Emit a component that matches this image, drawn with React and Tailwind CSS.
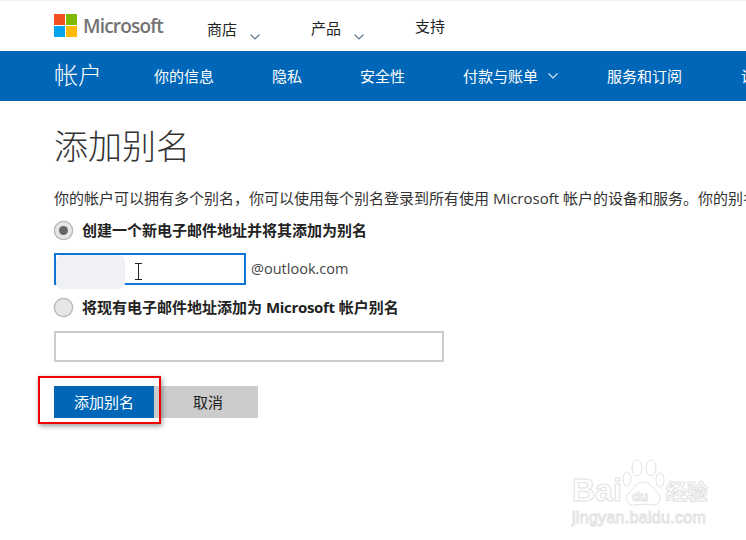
import React from 'react';

const FONT = "font-['Open_Sans','Noto_Sans_CJK_SC',sans-serif]";

function Chevron({ className }) {
    return (
        <svg className={className} width="10" height="6" viewBox="0 0 10 6" fill="none" stroke="currentColor" strokeWidth="1.2">
            <path d="M0.5 0.5 L5 5 L9.5 0.5" />
        </svg>
    );
}

function Radio({ checked }) {
    return (
        <span className="flex h-[19px] w-[19px] shrink-0 items-center justify-center rounded-full border border-[#b5b5b5] bg-[#e6e6e6] shadow-[0_0_1px_#999]">
            {checked && <span className="h-[9px] w-[9px] rounded-full bg-[#666666]" />}
        </span>
    );
}

function Watermark() {
    const outline = "text-white [-webkit-text-stroke:1px_#e2e2e2]";
    return (
        <div className="absolute left-[572px] top-[459px] w-[150px]">
            <div className="flex items-end">
                <span className={`font-['Liberation_Sans',sans-serif] text-[32px] leading-[32px] font-bold ${outline}`}>Bai</span>
                <svg className="ml-[-1px] mb-[-1px]" width="44" height="48" viewBox="0 0 44 48" fill="white" stroke="#e2e2e2" strokeWidth="1">
                    <ellipse cx="6" cy="20" rx="4" ry="7" />
                    <ellipse cx="16" cy="9" rx="5" ry="8" />
                    <ellipse cx="30" cy="9" rx="5" ry="8" />
                    <ellipse cx="39" cy="21" rx="4" ry="7" />
                    <path d="M22 23 C14 23 13 30 8 34 C2 40 7 47 14 46 C19 45 26 45 31 46 C38 47 42 40 37 34 C32 30 30 23 22 23 Z" />
                    <text x="11" y="42" fontSize="13" fontFamily="Liberation Sans" fontWeight="700" fill="white">du</text>
                </svg>
                <span className={`ml-[1px] text-[21px] leading-[30px] font-bold ${outline}`}>经验</span>
            </div>
            <div className={`mt-[2px] font-['Liberation_Sans',sans-serif] text-[16px] leading-[20px] tracking-[0.3px] ${outline} [-webkit-text-stroke-width:0.6px]`}>jingyan.baidu.com</div>
        </div>
    );
}

export default function App() {
    return (
        <div className={`relative h-[540px] w-[746px] overflow-hidden bg-white ${FONT}`}>
            <div className="h-[1px] bg-[#f0f0f0]" />

            {/* top header */}
            <div className="flex h-[50px] items-start pl-[54px]">
                <div className="mt-[13px] grid h-[23px] w-[23px] grid-cols-2 gap-[1px]">
                    <span className="bg-[#f25022]" />
                    <span className="bg-[#7fba00]" />
                    <span className="bg-[#00a4ef]" />
                    <span className="bg-[#ffb900]" />
                </div>
                <span className="ml-[6px] mt-[10px] w-[79px] text-[19px] leading-[30px] font-semibold tracking-[-0.8px] text-[#737373]">Microsoft</span>
                <span className="ml-[45px] mt-[17px] text-[15px] leading-[22px] text-[#222]">商店</span>
                <Chevron className="ml-[13px] mt-[33px] text-[#60788f]" />
                <span className="ml-[51px] mt-[16px] text-[15px] leading-[22px] text-[#222]">产品</span>
                <Chevron className="ml-[13px] mt-[33px] text-[#60788f]" />
                <span className="ml-[51px] mt-[14px] text-[15px] leading-[22px] text-[#222]">支持</span>
            </div>

            {/* blue nav */}
            <div className="flex h-[50px] items-center whitespace-nowrap bg-[#0067b8] pl-[54px] text-[15px] text-white">
                <span className="mb-[2px] w-[100px] shrink-0 text-[24px] leading-[32px] font-light">帐户</span>
                <span className="w-[118px] shrink-0">你的信息</span>
                <span className="w-[88px] shrink-0">隐私</span>
                <span className="w-[103px] shrink-0">安全性</span>
                <span className="shrink-0">付款与账单</span>
                <Chevron className="ml-[10px] mr-[49px] shrink-0 text-[#d5e6f5]" />
                <span className="w-[134px] shrink-0">服务和订阅</span>
                <span className="shrink-0">设置</span>
            </div>

            {/* form */}
            <div className="pl-[54px]">
                <h1 className="mt-[23px] text-[34px] leading-[44px] font-light text-[#333]">添加别名</h1>
                <p className="mt-[19px] whitespace-nowrap text-[15px] leading-[22px] text-[#333]">
                    你的帐户可以拥有多个别名，你可以使用每个别名登录到所有使用 Microsoft 帐户的设备和服务。你的别名都使用相同的密码。
                </p>
                <label className="mt-[10px] flex h-[22px] items-center gap-[9px] text-[15px] font-bold text-[#222]">
                    <Radio checked />
                    创建一个新电子邮件地址并将其添加为别名
                </label>
                <div className="mt-[12px] flex items-center">
                    <div className="relative h-[32px] w-[192px] border-2 border-[#0f75d6] bg-white">
                        <div className="absolute left-[0px] top-[0px] h-[34px] w-[69px] rounded-[6px] bg-[#eff1f5]" />
                        <svg className="absolute left-[78px] top-[8px]" width="9" height="17" viewBox="0 0 9 17" fill="none" stroke="#222" strokeWidth="1">
                            <path d="M1 0.5 H8 M1 16.5 H8 M4.5 0.5 V16.5" />
                        </svg>
                    </div>
                    <span className="ml-[5px] text-[14.5px] text-[#444]">@outlook.com</span>
                </div>
                <label className="mt-[11px] flex h-[22px] items-center gap-[9px] text-[15px] font-bold text-[#222]">
                    <Radio />
                    <span>将现有电子邮件地址添加为 <span className="tracking-[-0.3px]">Microsoft</span> 帐户别名</span>
                </label>
                <div className="mt-[13px] h-[31px] w-[390px] border-2 border-[#cccccc] bg-white" />
                <div className="mt-[24px] flex text-[15px]">
                    <button className="h-[32px] w-[100px] bg-[#0067b8] text-white">添加别名</button>
                    <button className="h-[32px] w-[104px] bg-[#cccccc] pl-[4px] text-[#222]">取消</button>
                </div>
            </div>

            {/* red annotation box */}
            <div className="absolute left-[38px] top-[376px] h-[48px] w-[123px] border-2 border-[#f00000] shadow-[1px_2px_5px_rgba(0,0,0,0.4)]" />

            <Watermark />
        </div>
    );
}
